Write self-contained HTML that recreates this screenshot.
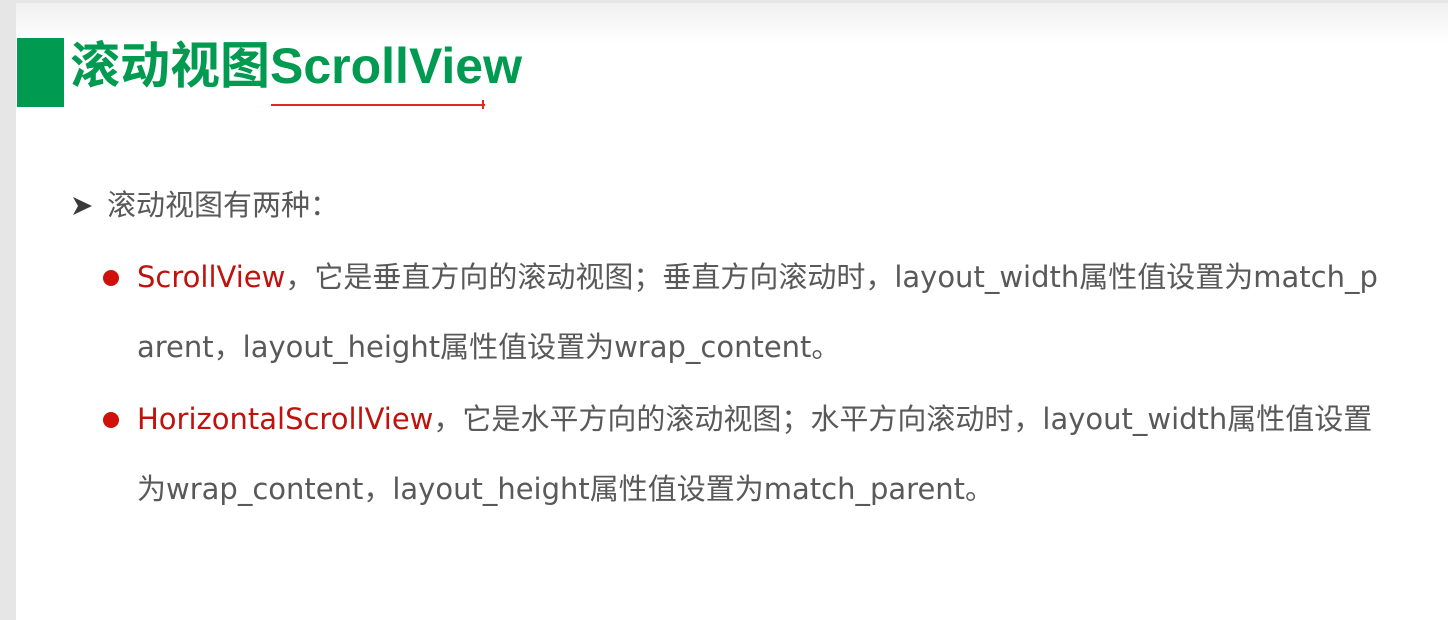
<!DOCTYPE html>
<html><head><meta charset="utf-8"><style>
html,body{margin:0;padding:0}
body{width:1448px;height:620px;background:#e6e6e6;position:relative;overflow:hidden;font-family:"DejaVu Sans","Noto Sans CJK SC",sans-serif}
.page{position:absolute;left:16px;top:3px;right:0;bottom:0;background:linear-gradient(#f0f0f0 0,#fff 40px,#fff 100%)}
.blk{position:absolute;left:17px;top:38px;width:47px;height:69px;background:#009a50}
.title{position:absolute;left:70px;top:33px;font-size:50px;font-weight:bold;color:#009a50;white-space:nowrap;line-height:66px;font-family:"Liberation Sans","Noto Sans CJK SC",sans-serif}
.ul{position:absolute;left:271px;top:104px;width:214px;height:2px;background:#e0281c}
.ulp{position:absolute;left:482px;top:100px;width:2px;height:9px;background:#e0281c}
.t{position:absolute;white-space:nowrap;font-size:29px;color:#595959;line-height:36px}
.r{color:#c0120c}
.dot{position:absolute;width:16px;height:16px;border-radius:50%;background:#d0100a}
</style></head><body>
<div class="page"></div>
<div class="blk"></div>
<div class="title">滚动视图ScrollView</div>
<div class="ul"></div><div class="ulp"></div>
<svg style="position:absolute;left:72px;top:196px" width="22" height="20" viewBox="0 0 22 20"><path d="M1 1 L20 10 L1 19 L6 10 Z" fill="#3a3a3a"/></svg>
<div class="t" style="left:107px;top:187px">滚动视图有两种：</div>
<div class="dot" style="left:103px;top:270px"></div>
<div class="t" style="left:137px;top:259px"><span class="r">ScrollView</span>，它是垂直方向的滚动视图；垂直方向滚动时，layout_width属性值设置为match_p</div>
<div class="t" style="left:137px;top:329px">arent，layout_height属性值设置为wrap_content。</div>
<div class="dot" style="left:103px;top:412px"></div>
<div class="t" style="left:137px;top:401px"><span class="r">HorizontalScrollView</span>，它是水平方向的滚动视图；水平方向滚动时，layout_width属性值设置</div>
<div class="t" style="left:137px;top:471px">为wrap_content，layout_height属性值设置为match_parent。</div>
</body></html>
